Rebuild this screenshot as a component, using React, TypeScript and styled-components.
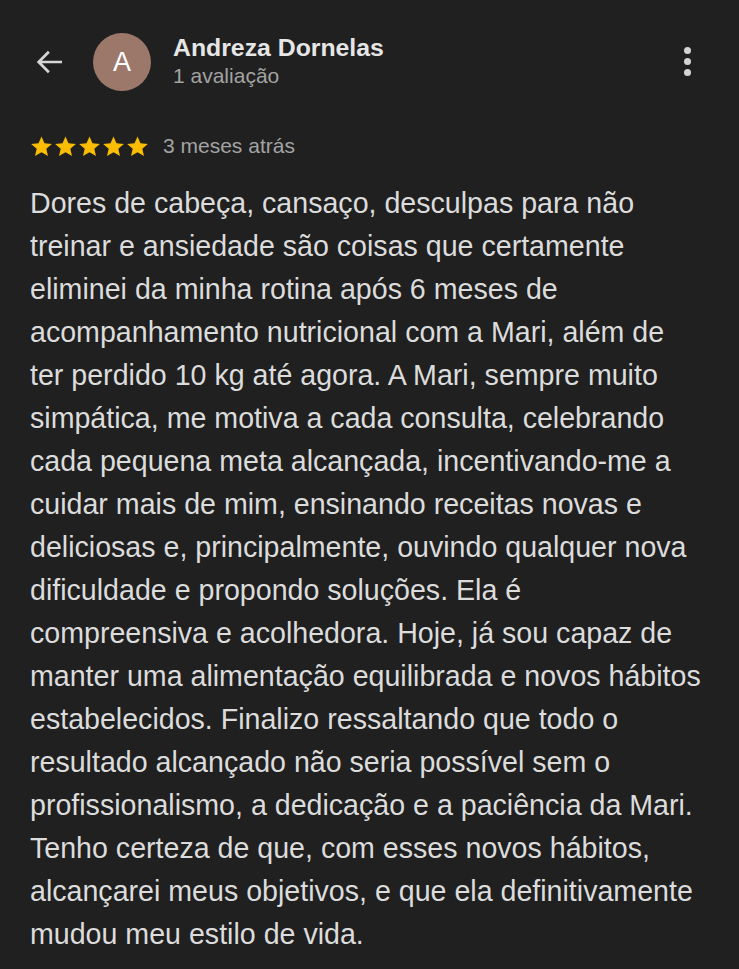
import React from "react";
import styled, { createGlobalStyle } from "styled-components";

const GlobalStyle = createGlobalStyle`
  html, body {
    margin: 0;
    padding: 0;
    background: #202020;
  }
  body {
    font-family: "Liberation Sans", Arial, sans-serif;
    -webkit-font-smoothing: antialiased;
  }
`;

const lines = [
  "Dores de cabeça, cansaço, desculpas para não",
  "treinar e ansiedade são coisas que certamente",
  "eliminei da minha rotina após 6 meses de",
  "acompanhamento nutricional com a Mari, além de",
  "ter perdido 10 kg até agora. A Mari, sempre muito",
  "simpática, me motiva a cada consulta, celebrando",
  "cada pequena meta alcançada, incentivando-me a",
  "cuidar mais de mim, ensinando receitas novas e",
  "deliciosas e, principalmente, ouvindo qualquer nova",
  "dificuldade e propondo soluções. Ela é",
  "compreensiva e acolhedora. Hoje, já sou capaz de",
  "manter uma alimentação equilibrada e novos hábitos",
  "estabelecidos. Finalizo ressaltando que todo o",
  "resultado alcançado não seria possível sem o",
  "profissionalismo, a dedicação e a paciência da Mari.",
  "Tenho certeza de que, com esses novos hábitos,",
  "alcançarei meus objetivos, e que ela definitivamente",
  "mudou meu estilo de vida.",
];

const Star = () => (
  <svg width="23" height="23" viewBox="0 0 24 24">
    <path
      fill="#fbbc04"
      d="M12 1.5l3.1 7.1 7.7.7-5.8 5.1 1.8 7.6L12 18l-6.8 4 1.8-7.6-5.8-5.1 7.7-.7z"
    />
  </svg>
);

export default function App() {
  return (
    <>
      <GlobalStyle />
      <Page>
        <Header>
          <BackButton aria-label="Voltar">
            <svg width="34" height="34" viewBox="0 0 24 24">
              <path
                fill="none"
                stroke="#d6d6d6"
                strokeWidth="1.9"
                d="M20.5 12H4M11.2 4.8L4 12l7.2 7.2"
              />
            </svg>
          </BackButton>
          <Avatar>A</Avatar>
          <Author>
            <Name>Andreza Dornelas</Name>
            <Count>1 avaliação</Count>
          </Author>
          <MoreButton aria-label="Mais opções">
            <Dot />
            <Dot />
            <Dot />
          </MoreButton>
        </Header>
        <Meta>
          <Stars>
            {[0, 1, 2, 3, 4].map((i) => (
              <Star key={i} />
            ))}
          </Stars>
          <When>3 meses atrás</When>
        </Meta>
        <Review>
          {lines.map((l, i) => (
            <Line key={i}>{l}</Line>
          ))}
        </Review>
      </Page>
    </>
  );
}

const Page = styled.div`
  width: 739px;
  min-height: 969px;
  background: #202020;
  color: #dcdcdc;
  box-sizing: border-box;
  padding-top: 33px;
`;

const Header = styled.div`
  display: flex;
  align-items: center;
  padding: 0 48px 0 32px;
  height: 58px;
`;

const BackButton = styled.div`
  display: flex;
  width: 36px;
  height: 36px;
  align-items: center;
  justify-content: center;
  margin-right: 25px;
`;

const Avatar = styled.div`
  width: 58px;
  height: 58px;
  border-radius: 50%;
  background: #9c786b;
  color: #ffffff;
  font-size: 27px;
  display: flex;
  align-items: center;
  justify-content: center;
  margin-right: 22px;
`;

const Author = styled.div`
  display: flex;
  flex-direction: column;
  flex: 1;
  margin-top: -1px;
`;

const Name = styled.div`
  font-size: 24.8px;
  font-weight: 700;
  color: #e6e6e6;
  line-height: 28px;
`;

const Count = styled.div`
  font-size: 21px;
  color: #a3a3a3;
  line-height: 28px;
`;

const MoreButton = styled.div`
  display: flex;
  flex-direction: column;
  gap: 4px;
  align-items: center;
  width: 8px;
  margin-top: -1px;
`;

const Dot = styled.span`
  width: 7px;
  height: 7px;
  border-radius: 50%;
  background: #d4d4d4;
`;

const Meta = styled.div`
  display: flex;
  align-items: center;
  padding: 0 30px;
  margin-top: 43px;
  height: 24px;
`;

const Stars = styled.div`
  display: flex;
  gap: 1px;
  margin-right: 14px;
`;

const When = styled.span`
  font-size: 21px;
  color: #a3a3a3;
`;

const Review = styled.div`
  padding: 24px 30px 0;
  font-size: 28.6px;
  line-height: 43px;
  color: #dcdcdc;
`;

const Line = styled.div`
  white-space: nowrap;
`;
